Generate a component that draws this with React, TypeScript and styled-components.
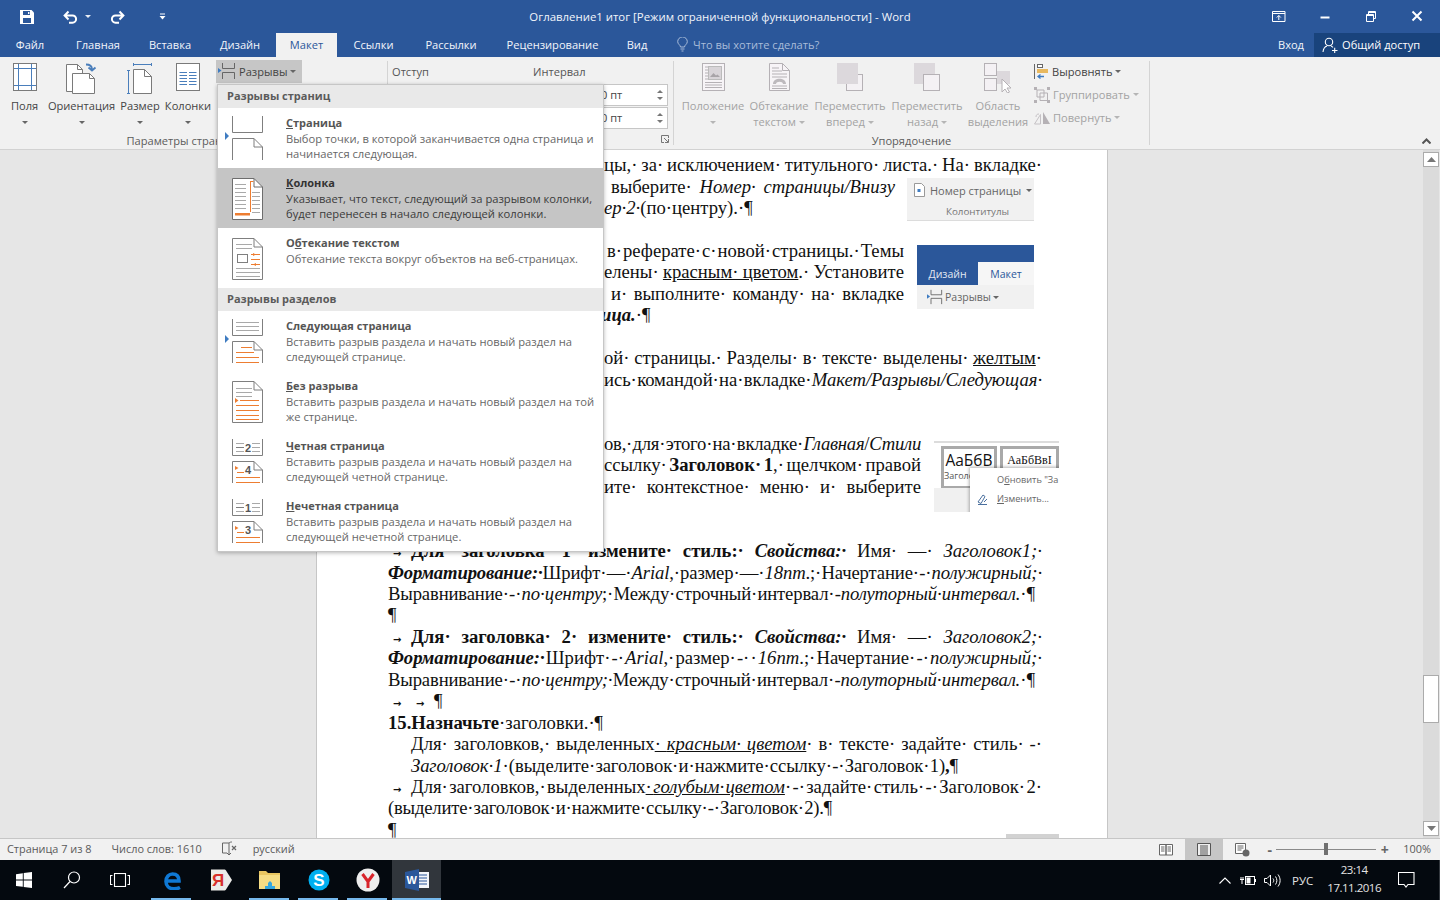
import React from "react";
import styled, { createGlobalStyle } from "styled-components";

const UI = `"Open Sans", "Noto Sans", "Liberation Sans", sans-serif`;

const GlobalStyle = createGlobalStyle`
  html, body { margin: 0; padding: 0; height: 100%; overflow: hidden; }
  #root { height: 100%; }
  * { box-sizing: border-box; }
`;

// шапка окна
const Word = styled.div`
  position: relative;
  width: 1440px;
  height: 900px;
  display: flex;
  flex-direction: column;
  overflow: hidden;
  font-family: ${UI};
  font-size: 11.1px;
  color: #444;
  background: #e6e6e6;
`;

const TitleBar = styled.div`
  height: 33px;
  flex: none;
  display: grid;
  grid-template-columns: 1fr auto 1fr;
  align-items: center;
  background: #2b579a;
  color: #fff;
`;

const Qat = styled.div`
  display: flex;
  align-items: center;
  height: 100%;
  padding-left: 19px;
`;

const QatBtn = styled.span<{ $w: number }>`
  width: ${({ $w }) => $w}px;
  display: flex;
  align-items: center;
  justify-content: flex-start;
`;

const Title = styled.div`
  font-size: 11.4px;
  color: #f2f5fa;
  white-space: nowrap;
`;

const WinButtons = styled.div`
  display: flex;
  justify-content: flex-end;
  height: 100%;
`;

const WinBtn = styled.span`
  width: 46px;
  display: flex;
  align-items: center;
  justify-content: center;
`;

const TabBar = styled.div`
  height: 24px;
  flex: none;
  display: flex;
  align-items: stretch;
  background: #2b579a;
  color: #f2f5fa;
`;

const Tab = styled.div<{ $active?: boolean; $w: number }>`
  width: ${({ $w }) => $w}px;
  display: flex;
  align-items: center;
  justify-content: center;
  padding-bottom: 1px;
  white-space: nowrap;
  background: ${({ $active }) => ($active ? "#f1f1f1" : "transparent")};
  color: ${({ $active }) => ($active ? "#2b579a" : "#f2f5fa")};
`;

const TellMe = styled.div`
  display: flex;
  align-items: center;
  gap: 5px;
  margin-left: 16px;
  padding-bottom: 1px;
  color: #a9bcd9;
  white-space: nowrap;
`;

const TabRight = styled.div`
  margin-left: auto;
  display: flex;
  align-items: stretch;
`;

const Login = styled.div`
  display: flex;
  align-items: center;
  padding: 0 10px 1px 0;
`;

const Share = styled.div`
  width: 126px;
  display: flex;
  align-items: center;
  gap: 4px;
  padding: 0 0 1px 8px;
  background: #19437c;
  color: #fff;
  white-space: nowrap;
`;

const Ribbon = styled.div`
  height: 93px;
  flex: none;
  display: flex;
  padding-top: 4px;
  background: #f1f1f1;
  border-bottom: 1px solid #d2d2d2;
`;

const Group = styled.div<{ $w: number }>`
  width: ${({ $w }) => $w}px;
  height: 84px;
  flex: none;
  display: flex;
  flex-direction: column;
  border-right: 1px solid #d4d4d4;
`;

const GroupBody = styled.div<{ $pad?: number }>`
  flex: 1;
  min-height: 0;
  display: flex;
  padding-left: ${({ $pad }) => $pad ?? 0}px;
`;

const GroupLabel = styled.div<{ $pr?: number }>`
  height: 12px;
  margin-bottom: -2px;
  padding-right: ${({ $pr }) => $pr ?? 0}px;
  line-height: 12px;
  text-align: center;
  white-space: nowrap;
  color: #5c5c5c;
`;

const LauncherRow = styled.div`
  height: 12px;
  margin-bottom: -2px;
  display: flex;
  justify-content: flex-end;
  padding-right: 4px;
`;

const LargeBtn = styled.div<{ $w: number; $off?: boolean }>`
  width: ${({ $w }) => $w}px;
  flex: none;
  display: flex;
  flex-direction: column;
  align-items: center;
  padding-top: 2px;
  color: ${({ $off }) => ($off ? "#a3a3a3" : "#444")};
  white-space: nowrap;
`;

const LargeIcon = styled.div`
  height: 32px;
  display: flex;
  align-items: flex-start;
  justify-content: center;
  margin-bottom: 3px;
`;

const BtnLine = styled.div`
  height: 16px;
  line-height: 16px;
  display: flex;
  align-items: center;
  gap: 3px;
`;

const Caret = styled.i<{ $off?: boolean; $white?: boolean }>`
  display: inline-block;
  width: 0;
  height: 0;
  border-left: 3px solid transparent;
  border-right: 3px solid transparent;
  border-top: 3px solid ${({ $off, $white }) => ($white ? "#e8edf5" : $off ? "#b5b5b5" : "#666")};
`;

const BreaksBtn = styled.div`
  width: 86px;
  height: 23px;
  flex: none;
  margin-top: -1px;
  display: flex;
  align-items: center;
  gap: 3px;
  padding: 0 0 1px 2px;
  background: #c6c6c6;
  color: #444;
`;

const ParaCol = styled.div<{ $w: number }>`
  width: ${({ $w }) => $w}px;
  flex: none;
  display: flex;
  flex-direction: column;
`;

const ParaHead = styled.div`
  height: 23px;
  line-height: 21px;
  color: #555;
`;

const Spinner = styled.div`
  width: 78px;
  height: 22px;
  margin: 0 0 1px auto;
  display: flex;
  align-items: center;
  justify-content: space-between;
  padding: 0 4px 1px 10px;
  background: #fff;
  border: 1px solid #c6c6c6;
`;

const SpinArrows = styled.span`
  display: flex;
  flex-direction: column;
  gap: 4px;
`;

const SpinUp = styled.i`
  display: block;
  width: 0;
  height: 0;
  border-left: 3px solid transparent;
  border-right: 3px solid transparent;
  border-bottom: 3px solid #777;
`;

const SpinDown = styled(SpinUp)`
  border-bottom: 0;
  border-top: 3px solid #777;
`;

const SmallCol = styled.div`
  display: flex;
  flex-direction: column;
  margin: -1px 0 0 2px;
`;

const SmallBtn = styled.div<{ $off?: boolean }>`
  height: 23px;
  display: flex;
  align-items: center;
  gap: 3px;
  color: ${({ $off }) => ($off ? "#a3a3a3" : "#444")};
  white-space: nowrap;
`;

const Collapse = styled.div`
  margin-left: auto;
  flex: none;
  align-self: flex-end;
  padding: 0 9px 5px 0;
  display: flex;
`;

// документ
const Workspace = styled.div`
  flex: 1;
  min-height: 0;
  display: flex;
  overflow: hidden;
  background: #e6e6e6;
`;

const Page = styled.div`
  width: 792px;
  margin-left: 316px;
  flex: none;
  padding: 4.3px 65px 0 71px;
  background: #fff;
  border-left: 1px solid #c6c6c6;
  border-right: 1px solid #c6c6c6;
  font-family: "Liberation Serif", "Times New Roman", serif;
  font-size: 18.67px;
  color: #111;
`;

// пробелы в строке нулевой ширины, зазоры дает только выравнивание
const Line = styled.div<{ $from?: number; $to?: number; $just?: boolean; $ls?: number }>`
  height: 21.45px;
  line-height: 21.45px;
  white-space: nowrap;
  margin-left: ${({ $from }) => $from ?? 0}px;
  margin-right: ${({ $to }) => $to ?? 0}px;
  text-align: ${({ $just }) => ($just ? "justify" : "left")};
  text-align-last: ${({ $just }) => ($just ? "justify" : "left")};
  word-spacing: ${({ $just }) => ($just ? "-0.25em" : "0")};
  letter-spacing: ${({ $ls }) => $ls ?? 0}px;
`;

const TabMark = styled.span`
  display: inline-block;
  width: 23px;
  text-indent: 5px;
  font-family: "DejaVu Sans", sans-serif;
  font-size: 10px;
  font-weight: 700;
  letter-spacing: 0;
`;

const Block = styled.div`
  display: flex;
  align-items: flex-start;
`;

const TextCol = styled.div<{ $w: number }>`
  width: ${({ $w }) => $w}px;
  flex: none;
`;

const Scroll = styled.div`
  width: 16px;
  margin-left: auto;
  margin-right: 1px;
  padding: 2px 0;
  display: flex;
  flex-direction: column;
  background: #dbdbdb;
`;

const ScrollBtn = styled.div`
  height: 15px;
  flex: none;
  display: flex;
  align-items: center;
  justify-content: center;
  background: #fff;
  border: 1px solid #ababab;
`;

const ScrollThumb = styled.div`
  height: 48px;
  margin-top: 508px;
  margin-bottom: auto;
  flex: none;
  background: #fff;
  border: 1px solid #ababab;
`;

// картинки внутри документа
const SnipNumber = styled.div`
  width: 127px;
  height: 43px;
  margin: 2px 0 0 12px;
  flex: none;
  display: flex;
  flex-direction: column;
  background: #f1f1f1;
  border-bottom: 1px solid #dcdcdc;
  font-family: ${UI};
  font-size: 11px;
  color: #666;
`;

const SnipRow = styled.div`
  display: flex;
  align-items: center;
  gap: 5px;
  height: 25px;
  padding-left: 7px;
  white-space: nowrap;
`;

const SnipCaption = styled.div`
  text-align: center;
  padding-left: 14px;
  font-size: 9.8px;
  line-height: 17px;
  color: #777;
`;

const SnipTabs = styled.div`
  width: 117px;
  height: 64px;
  margin: 5px 0 0 13px;
  flex: none;
  display: flex;
  flex-direction: column;
  background: #2b579a;
  font-family: ${UI};
  font-size: 10.5px;
`;

const SnipTabRow = styled.div`
  margin-top: 17px;
  height: 23px;
  display: flex;
  align-items: center;
  color: #e3e9f3;
`;

const SnipTabName = styled.span`
  width: 61px;
  text-align: center;
`;

const SnipTabOn = styled.span`
  flex: 1;
  height: 100%;
  display: flex;
  align-items: center;
  justify-content: center;
  background: #f6f6f6;
  color: #2b579a;
`;

const SnipBreaks = styled.div`
  flex: 1;
  display: flex;
  align-items: center;
  gap: 2px;
  padding-left: 10px;
  background: #f1f1f1;
  color: #666;
`;

const SnipStyles = styled.div`
  position: relative;
  width: 125px;
  height: 71px;
  margin: 8px -17px 0 13px;
  flex: none;
  overflow: hidden;
  padding: 3px 0 0 7px;
  background: #fff;
  border-top: 2px solid #dcdcdc;
  font-family: ${UI};
`;

const StyleRow = styled.div`
  display: flex;
  gap: 3px;
`;

const StyleBox = styled.div<{ $w: number; $serif?: boolean }>`
  width: ${({ $w }) => $w}px;
  height: 43px;
  flex: none;
  padding-top: 2px;
  text-align: center;
  white-space: nowrap;
  overflow: hidden;
  border: 3px solid #a9a9a9;
  color: #111;
  font-family: ${({ $serif }) => ($serif ? `"Liberation Serif", serif` : UI)};
  font-size: ${({ $serif }) => ($serif ? 12 : 15.5)}px;
  line-height: 18px;
`;

const StyleCaption = styled.div`
  font-size: 9px;
  line-height: 14px;
  text-align: left;
  color: #555;
`;

const StyleStrip = styled.div`
  position: absolute;
  left: 0;
  bottom: 0;
  width: 36px;
  height: 24px;
  background: #f0f0f0;
`;

const StyleMenu = styled.div`
  position: absolute;
  left: 36px;
  top: 25px;
  width: 100px;
  height: 50px;
  padding: 2px 0 0 27px;
  background: #fff;
  box-shadow: -1px -1px 3px rgba(0, 0, 0, 0.3);
  font-size: 9.2px;
  line-height: 19px;
  color: #666;
  white-space: nowrap;
`;

const StyleMenuPen = styled.svg`
  position: absolute;
  left: 7px;
  top: 25px;
`;

const SnipNext = styled.div`
  width: 53px;
  height: 30px;
  margin: 14.75px -17px 0 0;
  flex: none;
  background: #d2d2d2;
`;

// меню разрывов
const Menu = styled.div`
  position: absolute;
  left: 217px;
  top: 84px;
  width: 387px;
  background: #fff;
  border: 1px solid #c6c6c6;
  box-shadow: 0 1px 4px rgba(0, 0, 0, 0.28);
`;

const MenuHead = styled.div`
  height: 23px;
  line-height: 22px;
  padding-left: 9px;
  background: #e9e9e9;
  font-size: 11px;
  font-weight: 700;
  color: #5b5b5b;
`;

const MenuItem = styled.div<{ $on?: boolean }>`
  height: 60px;
  display: flex;
  padding-left: 4px;
  background: ${({ $on }) => ($on ? "#c5c5c5" : "transparent")};
`;

const MenuIcon = styled.svg`
  flex: none;
`;

const MenuText = styled.div<{ $on?: boolean }>`
  padding: 6px 0 0 20px;
  font-size: 11.2px;
  line-height: 15px;
  color: ${({ $on }) => ($on ? "#3b3b3b" : "#676767")};
  white-space: nowrap;
`;

const MenuTitle = styled.div<{ $on?: boolean }>`
  font-size: 11px;
  font-weight: 700;
  line-height: 17px;
  color: ${({ $on }) => ($on ? "#333" : "#555")};
`;

// строка состояния
const StatusBar = styled.div`
  height: 22px;
  flex: none;
  display: flex;
  align-items: stretch;
  background: #f1f1f1;
  border-top: 1px solid #c6c6c6;
  font-size: 10.9px;
  color: #5a5a5a;
`;

const StatusItem = styled.div<{ $gap: number }>`
  display: flex;
  align-items: center;
  margin-left: ${({ $gap }) => $gap}px;
  padding-bottom: 2px;
  white-space: nowrap;
`;

const StatusRight = styled.div`
  margin-left: auto;
  display: flex;
  align-items: stretch;
  padding-right: 9px;
`;

const ViewBtn = styled.div<{ $on?: boolean }>`
  width: 38px;
  display: flex;
  align-items: center;
  justify-content: center;
  background: ${({ $on }) => ($on ? "#c6c6c6" : "transparent")};
`;

const Zoom = styled.div`
  display: flex;
  align-items: center;
  margin-left: 4px;
`;

const ZoomTrack = styled.div`
  width: 100px;
  height: 1px;
  display: flex;
  justify-content: center;
  margin: 0 4px 0 2px;
  background: #8a8a8a;
`;

const ZoomThumb = styled.i`
  display: block;
  width: 4px;
  height: 12px;
  margin-top: -6px;
  background: #6f6f6f;
`;

const ZoomSign = styled.span`
  width: 9px;
  text-align: center;
  font-size: 14px;
  font-weight: 700;
  line-height: 14px;
  color: #666;
`;

const Taskbar = styled.div`
  height: 40px;
  flex: none;
  display: flex;
  align-items: stretch;
  background: #04090f;
  color: #e4e4e4;
`;

const SysBtn = styled.div`
  width: 48px;
  display: flex;
  align-items: center;
  justify-content: center;
`;

const Apps = styled.div`
  display: flex;
  margin-left: 3px;
`;

const AppBtn = styled.div<{ $running?: boolean; $active?: boolean }>`
  position: relative;
  width: 49px;
  display: flex;
  align-items: center;
  justify-content: center;
  background: ${({ $active }) => ($active ? "#31363c" : "transparent")};

  &::after {
    content: "";
    position: absolute;
    left: ${({ $active }) => ($active ? 0 : 4)}px;
    right: ${({ $active }) => ($active ? 0 : 5)}px;
    bottom: 0;
    height: 2px;
    background: ${({ $running }) => ($running ? "#76b9ed" : "transparent")};
  }
`;

const Tray = styled.div`
  margin-left: auto;
  display: flex;
  align-items: center;
  padding-right: 4px;
  border-right: 1px solid #33383e;
  font-size: 11.5px;
`;

const TrayItem = styled.div<{ $gap: number }>`
  margin-left: ${({ $gap }) => $gap}px;
  display: flex;
  align-items: center;
`;

const Clock = styled.div`
  margin: -2px 0 0 14px;
  text-align: center;
  line-height: 18px;
  letter-spacing: -0.5px;
  white-space: nowrap;
`;

/* иконки ленты */
const SaveIcon = () => (
  <svg width="16" height="16" viewBox="0 0 16 16">
    <path d="M1 1h11.5L15 3.5V15H1z" fill="#fff" />
    <path d="M4 2h7v4H4zM4 9h8v5H4z" fill="#2b579a" />
    <path d="M9 3h1.4v2H9z" fill="#fff" />
  </svg>
);

const UndoIcon = ({ flip }: { flip?: boolean }) => (
  <svg width="15" height="14" viewBox="0 0 15 14" style={flip ? { transform: "scaleX(-1)" } : undefined}>
    <path d="M2 5.5h7.5a3.6 3.6 0 0 1 0 7.2H6M5.5 1.5 1.6 5.5l3.9 4" fill="none" stroke="#fff" strokeWidth="2" />
  </svg>
);

const CustomizeIcon = () => (
  <svg width="7" height="7" viewBox="0 0 7 7">
    <path d="M1 1h5" stroke="#fff" />
    <path d="M.5 3h6L3.5 6.5z" fill="#fff" />
  </svg>
);

const WinIcon = ({ kind }: { kind: string }) => (
  <svg width="14" height="13" viewBox="0 0 14 13" fill="none" stroke="#fff">
    {kind === "ribbon" && <path d="M.5 1.5h12.5v10H.5zM.5 3.5h12.5M6.8 10V5.5M4.8 7.5l2-2 2 2" />}
    {kind === "min" && <path d="M2.5 7.5h9" strokeWidth="2" />}
    {kind === "max" && <path d="M2.5 4.5h7v7h-7zM4.5 4V1.5h7v7H10M2.5 5.5h7M4.5 2.5h7" />}
    {kind === "close" && <path d="M2.5 1.5l9 9M11.5 1.5l-9 9" strokeWidth="2" />}
  </svg>
);

const BulbIcon = () => (
  <svg width="11" height="15" viewBox="0 0 11 15" fill="none" stroke="#a9bcd9">
    <path d="M3.5 10c0-2-2.8-2.8-2.8-5.3a4.8 4.8 0 0 1 9.6 0C10.3 7.2 7.5 8 7.5 10zM3.5 12h4M4.5 14h2" />
  </svg>
);

const UserIcon = () => (
  <svg width="16" height="16" viewBox="0 0 16 16" fill="none" stroke="#fff" strokeWidth="1.1">
    <circle cx="7" cy="5" r="3.7" />
    <path d="M1 15c.4-3.5 2.4-5.5 4-6M9 9c.8.3 1.5.8 2 1.4M10 13.5h5.5M12.7 10.7v5.3" />
  </svg>
);

const MarginsIcon = () => (
  <svg width="24" height="29" viewBox="0 0 24 29" fill="#fff">
    <rect x=".5" y=".5" width="23" height="27" stroke="#7a7a7a" />
    <path d="M5.5 1v26M18.5 1v26M1 5.5h22M1 22.5h22" stroke="#4a7ebb" fill="none" />
  </svg>
);

const OrientIcon = () => (
  <svg width="31" height="32" viewBox="0 0 31 32" fill="#fff" stroke="#7a7a7a">
    <path d="M.5 1.5h11l5 5v22H.5z" />
    <path d="M11.5 1.5v5h5" fill="none" />
    <path d="M6.5 10.5h17l5 5v15h-22z" />
    <path d="M23.5 10.5v5h5" fill="none" />
    <path d="M20 1.5c4 0 6 1.500 6 5M22.5 4.500l3.500 3 3.500-3" fill="none" stroke="#4a7ebb" strokeWidth="1.8" />
  </svg>
);

const SizeIcon = () => (
  <svg width="26" height="31" viewBox="0 0 26 31" fill="#fff" stroke="#7a7a7a">
    <path d="M6.5 1.5h18M6.5 0v3M24.5 0v3M1.5 7v24M0 7.5h3M0 30.5h3" stroke="#4a7ebb" fill="none" />
    <path d="M6.5 6.5h11l7 7v17h-18z" />
    <path d="M17.5 6.5v7h7" fill="none" />
  </svg>
);

const ColumnsIcon = () => (
  <svg width="24" height="29" viewBox="0 0 24 29" fill="#fff">
    <rect x=".5" y=".5" width="23" height="27" stroke="#7a7a7a" />
    <path d="M3.5 9.5h7.5M13 9.5h7.5M3.5 12.5h7.5M13 12.5h7.5M3.5 15.5h7.5M13 15.5h7.5M3.5 18.5h7.5M13 18.5h7.5M3.5 21.5h7.5M13 21.5h7.5" stroke="#4a7ebb" />
  </svg>
);

const BreaksIcon = ({ w = 18 }: { w?: number }) => (
  <svg width={w} height="16" viewBox="0 0 18 16" fill="none" stroke="#666">
    <path d="M4.5 0v5.5h12V0M4.5 16V9.5h12V16" />
    <path d="M0 5l3.5 2.5L0 10z" fill="#3f7cc1" stroke="none" />
  </svg>
);

const PositionIcon = () => (
  <svg width="23" height="28" viewBox="0 0 23 28" fill="#f7f4f7" stroke="#b5b1b5">
    <rect x=".5" y=".5" width="22" height="27" />
    <path d="M3 4h3M3 7h3M3 10h3M3 13h3M3 16h3M3 19.5h17M3 22h17M3 24.5h17" fill="none" />
    <rect x="6.5" y="3.5" width="13" height="13" fill="#d8d4d8" stroke="#bbb" />
    <path d="M8 14l3.5-4 2.5 2.5 1.5-1 2.5 2.5z" fill="#a8a4a8" stroke="none" />
  </svg>
);

const WrapIcon = () => (
  <svg width="21" height="28" viewBox="0 0 21 28" fill="#f7f4f7" stroke="#b5b1b5">
    <path d="M.5.5h13l7 7v20H.5z" />
    <path d="M13.5.5v7h7M3 5h7M3 8h10M3 11h15M3 14h15M3 23h15M3 25.5h15" fill="none" />
    <path d="M4 21c0-7 13-7 13 0h-3c0-3-7-3-7 0z" fill="#bdb9bd" stroke="none" />
  </svg>
);

const ForwardIcon = () => (
  <svg width="27" height="28" viewBox="0 0 27 28">
    <rect x="9.5" y="11.5" width="16" height="16" fill="#f4f1f4" stroke="#b5b1b5" />
    <rect width="21" height="21" fill="#dcd8dc" />
  </svg>
);

const BackwardIcon = () => (
  <svg width="27" height="28" viewBox="0 0 27 28">
    <rect width="21" height="21" fill="#dcd8dc" />
    <rect x="9.5" y="11.5" width="16" height="16" fill="#f4f1f4" stroke="#b5b1b5" />
  </svg>
);

const SelectionIcon = () => (
  <svg width="29" height="30" viewBox="0 0 29 30">
    <rect x=".5" y=".5" width="12" height="12" fill="#f4f1f4" stroke="#b5b1b5" />
    <rect x="13" y="8" width="13" height="13" fill="#dcd8dc" />
    <rect x=".5" y="15.5" width="12" height="12" fill="#f4f1f4" stroke="#b5b1b5" />
    <path d="M18 16v13l3-3 2.5 4 2-1-2.5-4h4z" fill="#fff" stroke="#b5b1b5" />
  </svg>
);

const AlignIcon = () => (
  <svg width="15" height="15" viewBox="0 0 15 15">
    <path d="M.5 0v15" stroke="#666" />
    <rect x="3.5" y=".5" width="5" height="3" fill="#fff" stroke="#666" />
    <rect x="3" y="5" width="11" height="4" fill="#e8b85e" />
    <path d="M10 12.5H4M6.5 10.5l-2.5 2 2.5 2" fill="none" stroke="#3f7cc1" strokeWidth="1.3" />
  </svg>
);

const GroupIcon = () => (
  <svg width="16" height="16" viewBox="0 0 16 16" fill="none" stroke="#b5b1b5">
    <path d="M3 3h7v7H3zM6 6h7.5v7.5H6z" />
    <path d="M0 0h3v3H0zM13 0h3v3h-3zM0 13h3v3H0zM13 13h3v3h-3z" fill="#b5b1b5" stroke="none" />
  </svg>
);

const RotateIcon = () => (
  <svg width="16" height="14" viewBox="0 0 16 14">
    <path d="M9 1v12h7z" fill="#b5b1b5" />
    <path d="M6.5 3.5v9.5H.5zM2 6c0-2 1-3 3-3" fill="none" stroke="#c5c1c5" />
  </svg>
);

const PageNumberIcon = () => (
  <svg width="11" height="14" viewBox="0 0 11 14" fill="#fff" stroke="#999">
    <path d="M.5.5h7l3 3v10H.5z" />
    <rect x="3.5" y="6" width="3" height="3" fill="#3f7cc1" stroke="none" />
  </svg>
);

const LauncherIcon = () => (
  <svg width="8" height="8" viewBox="0 0 8 8" fill="none" stroke="#777">
    <path d="M7.5 3V.5H.5v7H3M3 3l4 4M4 7.5h3.5V4" />
  </svg>
);

/* иконки меню */
const GR = "#7f7f7f";
const LG = "#a9a9a9";
const OR = "#ed7d31";

const Marker = () => <path d="M3 24l4 4-4 4z" fill="#3f7cc1" />;

const lines = (x1: number, x2: number, ys: number[], color: string) => (
  <path d={ys.map((y) => `M${x1} ${y}.5H${x2}`).join("")} stroke={color} fill="none" />
);

const TopSheet = () => <path d="M10.5 8V24.5H40.5V8" stroke={GR} fill="none" />;
const BottomSheet = () => (
  <>
    <path d="M10.5 52V30.5H32L40.5 39V52" stroke={GR} fill="#fff" />
    <path d="M32 30.5V39H40.5" stroke={GR} fill="none" />
  </>
);
const FullSheet = ({ on }: { on?: boolean }) => (
  <>
    <path d="M10.5 10.5H32L40.5 19V51.5H10.5z" stroke={on ? "#6d6d6d" : GR} fill="#fff" />
    <path d="M32 10.5V19H40.5" stroke={on ? "#6d6d6d" : GR} fill="none" />
  </>
);

const NumberMark = ({ x, y, n }: { x: number; y: number; n: string }) => (
  <text x={x} y={y} fontFamily='"Liberation Sans", sans-serif' fontWeight="700" fontSize="11" fill="#555">
    {n}
  </text>
);

const MenuIconBox = ({ children }: { children: React.ReactNode }) => (
  <MenuIcon width="44" height="60" viewBox="0 0 44 60">
    {children}
  </MenuIcon>
);

const PageBreakIcon = () => (
  <MenuIconBox>
    <Marker />
    <TopSheet />
    <BottomSheet />
  </MenuIconBox>
);

const ColumnBreakIcon = () => (
  <MenuIconBox>
    <FullSheet on />
    {lines(13, 24, [16, 20, 24, 28, 32, 36, 40], LG)}
    {lines(30, 38, [24, 28, 32, 36, 40, 44], LG)}
    <path d="M28.5 13v31" stroke={OR} fill="none" />
    <path d="M13 45h15v2.5H13z" fill={OR} />
    <path d="M28.5 13.5h3" stroke={OR} fill="none" />
  </MenuIconBox>
);

const WrapBreakIcon = () => (
  <MenuIconBox>
    <FullSheet />
    {lines(14, 30, [16, 20], LG)}
    {lines(14, 38, [40, 44, 48], LG)}
    <rect x="15.5" y="26.5" width="10" height="8" fill="#fff" stroke={GR} />
    {lines(29, 38, [26, 31, 36], OR)}
    <path d="M34 35l-3 1.5 3 1.5zM31 25l3 1.5-3 1.5z" fill={OR} />
  </MenuIconBox>
);

const NextPageIcon = () => (
  <MenuIconBox>
    <Marker />
    <TopSheet />
    {lines(14, 37, [11, 15, 19], LG)}
    <BottomSheet />
    {lines(19, 30, [36], OR)}
    {lines(14, 32, [41], OR)}
    {lines(14, 37, [46, 51], OR)}
  </MenuIconBox>
);

const ContinuousIcon = () => (
  <MenuIconBox>
    <FullSheet />
    {lines(14, 30, [17, 21, 25], LG)}
    {lines(18, 37, [29], OR)}
    {lines(14, 37, [34, 39, 44, 48], OR)}
    <path d="M13 27l3.5 2.5L13 32z" fill={OR} />
  </MenuIconBox>
);

const NumberedIcon = ({ top, bottom }: { top: string; bottom: string }) => (
  <MenuIconBox>
    <TopSheet />
    {lines(14, 22, [12, 20], LG)}
    {lines(30, 38, [12, 20], LG)}
    {lines(14, 22, [16], GR)}
    {lines(30, 38, [16], LG)}
    <NumberMark x={23} y={21} n={top} />
    <BottomSheet />
    {lines(15, 22, [41], OR)}
    {lines(14, 38, [46, 51], OR)}
    <path d="M13 35l3.5 2-3.5 2z" fill={OR} />
    <NumberMark x={23} y={43} n={bottom} />
  </MenuIconBox>
);

/* строка состояния и панель задач */
const SpellIcon = () => (
  <svg width="15" height="15" viewBox="0 0 15 15" fill="none" stroke="#666">
    <path d="M7 2H.5v10H5l2 2V2c1-1 2-1 3-1M7 14l2-2" />
    <path d="M10 5l4 4M14 5l-4 4" strokeWidth="1.2" />
  </svg>
);

const ReadIcon = () => (
  <svg width="14" height="13" viewBox="0 0 14 13" fill="#fff" stroke="#666">
    <path d="M.5 1.5h6.5v10.500H.5zM7 1.5h6.500v10.500H7z" />
    <path d="M2 4h3.500M2 6h3.500M2 8h3.500M8.500 4H12M8.500 6H12M8.500 8H12" fill="none" />
  </svg>
);

const PrintIcon = () => (
  <svg width="14" height="13" viewBox="0 0 14 13" fill="#eee" stroke="#555">
    <path d="M.5.5h13v12H.5z" />
    <path d="M3 3h8M3 5h8M3 7h8M3 9h8M3 11h8" fill="none" />
  </svg>
);

const WebIcon = () => (
  <svg width="15" height="14" viewBox="0 0 15 14" fill="#fff" stroke="#666">
    <path d="M.5.5h10v10H.5z" />
    <path d="M2.5 3h6M2.5 5h6M2.5 7h4" fill="none" />
    <circle cx="11" cy="10" r="3.5" fill="#666" stroke="none" />
  </svg>
);

const ChevronDown = () => (
  <svg width="9" height="5" viewBox="0 0 9 5">
    <path d="M0 0h9L4.5 5z" fill="#777" />
  </svg>
);

const ChevronUp = () => (
  <svg width="9" height="5" viewBox="0 0 9 5">
    <path d="M0 5h9L4.5 0z" fill="#777" />
  </svg>
);

const CollapseIcon = () => (
  <svg width="9" height="6" viewBox="0 0 9 6" fill="none" stroke="#555" strokeWidth="2">
    <path d="M.5 5.500l4-4 4 4" />
  </svg>
);

const WindowsLogo = () => (
  <svg width="16" height="16" viewBox="0 0 16 16" fill="#fff">
    <path d="M0 2.2l6.800-.9v6.300H0zM7.700 1.100L16 0v7.600H7.700zM0 8.500h6.800v6.300L0 13.900zM7.700 8.500H16V16l-8.300-1.100z" />
  </svg>
);

const SearchIcon = () => (
  <svg width="18" height="18" viewBox="0 0 18 18" fill="none" stroke="#fff" strokeWidth="1.2">
    <circle cx="11" cy="6.5" r="5.5" />
    <path d="M7 10.5L1 17" />
  </svg>
);

const TaskViewIcon = () => (
  <svg width="20" height="14" viewBox="0 0 20 14" fill="none" stroke="#fff" strokeWidth="1.1">
    <rect x="4.5" y=".5" width="11" height="13" />
    <path d="M2.5 2.5H.5v9h2M17.5 2.5h2v9h-2" />
  </svg>
);

const EdgeIcon = () => (
  <svg width="20" height="20" viewBox="0 0 20 20" fill="none" stroke="#0f78d4" strokeWidth="3.6">
    <path d="M18 17.5c-2 1-4 1.300-6 1.300-5 0-8-3-8-7.300C4 7 7 4 10.5 4c4 0 6.500 2.500 6.500 7H3" />
  </svg>
);

const YandexIcon = () => (
  <svg width="24" height="24" viewBox="0 0 24 24">
    <path d="M2 1.5h13c1 0 1.500.3 2 1l6 9.500-6 9.500c-.5.7-1 1-2 1H2z" fill="#ecebe8" />
    <text x="3" y="18" fontFamily='"Liberation Sans", sans-serif' fontWeight="700" fontSize="17" fill="#d8302a">
      Я
    </text>
  </svg>
);

const FolderIcon = () => (
  <svg width="22" height="18" viewBox="0 0 22 18">
    <path d="M0 0h7l2 2h12v16H0z" fill="#e9c661" />
    <path d="M0 4h21v14H0z" fill="#f6dd85" />
    <path d="M6 15h3v-3l2-2 2 2v3h3v3H6z" fill="#35a7e0" />
  </svg>
);

const SkypeIcon = () => (
  <svg width="22" height="22" viewBox="0 0 22 22">
    <circle cx="11" cy="11" r="10.5" fill="#00aff0" />
    <text x="11" y="17" textAnchor="middle" fontFamily='"Liberation Sans", sans-serif' fontWeight="700" fontSize="17" fill="#fff">
      S
    </text>
  </svg>
);

const BrowserIcon = () => (
  <svg width="24" height="24" viewBox="0 0 24 24">
    <circle cx="12" cy="12" r="11.5" fill="#eeeeee" />
    <path d="M6.5 6L12 13.5V20M17.5 6L12 13.5" fill="none" stroke="#d8232a" strokeWidth="3" />
  </svg>
);

const WordIcon = () => (
  <svg width="24" height="22" viewBox="0 0 24 22">
    <path d="M11 3h13v16H11z" fill="#f4f6fa" />
    <path d="M13 6h9M13 9h9M13 12h9M13 15h9" stroke="#2b579a" />
    <path d="M0 3l14-3v22L0 19z" fill="#2b579a" />
    <text x="1.5" y="15" fontFamily='"Liberation Sans", sans-serif' fontWeight="700" fontSize="11" fill="#fff">
      W
    </text>
  </svg>
);

const TrayChevron = () => (
  <svg width="12" height="7" viewBox="0 0 12 7" fill="none" stroke="#fff" strokeWidth="1.1">
    <path d="M.5 6.5L6 1l5.5 5.5" />
  </svg>
);

const PowerIcon = () => (
  <svg width="16" height="11" viewBox="0 0 16 11" fill="none" stroke="#fff">
    <rect x="5.5" y="1.5" width="9" height="8" />
    <rect x="6.5" y="2.5" width="4" height="6" fill="#fff" stroke="none" />
    <path d="M15.5 4v3M0 4.5h4M1 2v2.5M3 2v2.5M2 5v4" />
  </svg>
);

const SpeakerIcon = () => (
  <svg width="17" height="13" viewBox="0 0 17 13" fill="none" stroke="#fff">
    <path d="M.5 4.5h2.5L6.5 1v11L3 8.5H.5zM9 4.5c1 1.300 1 2.700 0 4M11.500 2.500c1.800 2.500 1.800 5.500 0 8M14 .5c2.800 3.600 2.800 8.400 0 12" />
  </svg>
);

const ActionIcon = () => (
  <svg width="17" height="16" viewBox="0 0 17 16" fill="none" stroke="#fff" strokeWidth="1.1">
    <path d="M.5.5h15.5v12H10L8 15l-2-2.5H.5z" />
  </svg>
);

const PenIcon = () => (
  <StyleMenuPen width="11" height="12" viewBox="0 0 11 12" fill="none" stroke="#4a6f9e">
    <path d="M1 9l5-7 2 1.5-4 7zM1 11.5h9M7 9l3-3" />
  </StyleMenuPen>
);

type Item = { title: React.ReactNode; text: string[]; icon: React.ReactNode; on?: boolean };

const pageBreaks: Item[] = [
  {
    title: <><u>С</u>траница</>,
    text: ["Выбор точки, в которой заканчивается одна страница и", "начинается следующая."],
    icon: <PageBreakIcon />,
  },
  {
    title: <><u>К</u>олонка</>,
    text: ["Указывает, что текст, следующий за разрывом колонки,", "будет перенесен в начало следующей колонки."],
    icon: <ColumnBreakIcon />,
    on: true,
  },
  {
    title: <>О<u>б</u>текание текстом</>,
    text: ["Обтекание текста вокруг объектов на веб-страницах."],
    icon: <WrapBreakIcon />,
  },
];

const sectionBreaks: Item[] = [
  {
    title: <>Следующая страница</>,
    text: ["Вставить разрыв раздела и начать новый раздел на", "следующей странице."],
    icon: <NextPageIcon />,
  },
  {
    title: <><u>Б</u>ез разрыва</>,
    text: ["Вставить разрыв раздела и начать новый раздел на той", "же странице."],
    icon: <ContinuousIcon />,
  },
  {
    title: <><u>Ч</u>етная страница</>,
    text: ["Вставить разрыв раздела и начать новый раздел на", "следующей четной странице."],
    icon: <NumberedIcon top="2" bottom="4" />,
  },
  {
    title: <><u>Н</u>ечетная страница</>,
    text: ["Вставить разрыв раздела и начать новый раздел на", "следующей нечетной странице."],
    icon: <NumberedIcon top="1" bottom="3" />,
  },
];

const renderItems = (items: Item[]) =>
  items.map((item, i) => (
    <MenuItem key={i} $on={item.on}>
      {item.icon}
      <MenuText $on={item.on}>
        <MenuTitle $on={item.on}>{item.title}</MenuTitle>
        {item.text.map((t) => (
          <div key={t}>{t}</div>
        ))}
      </MenuText>
    </MenuItem>
  ));

const tabs: [string, number, boolean?][] = [
  ["Файл", 60],
  ["Главная", 76],
  ["Вставка", 68],
  ["Дизайн", 72],
  ["Макет", 61, true],
  ["Ссылки", 73],
  ["Рассылки", 82],
  ["Рецензирование", 121],
  ["Вид", 48],
];

const App = () => {
  return (
    <Word>
      <GlobalStyle />
      <TitleBar>
        <Qat>
          <QatBtn $w={44}><SaveIcon /></QatBtn>
          <QatBtn $w={22}><UndoIcon /></QatBtn>
          <QatBtn $w={25}><Caret $white /></QatBtn>
          <QatBtn $w={49}><UndoIcon flip /></QatBtn>
          <QatBtn $w={10}><CustomizeIcon /></QatBtn>
        </Qat>
        <Title>Оглавление1 итог [Режим ограниченной функциональности] - Word</Title>
        <WinButtons>
          <WinBtn><WinIcon kind="ribbon" /></WinBtn>
          <WinBtn><WinIcon kind="min" /></WinBtn>
          <WinBtn><WinIcon kind="max" /></WinBtn>
          <WinBtn><WinIcon kind="close" /></WinBtn>
        </WinButtons>
      </TitleBar>

      <TabBar>
        {tabs.map(([name, w, active]) => (
          <Tab key={name} $w={w} $active={active}>{name}</Tab>
        ))}
        <TellMe>
          <BulbIcon />
          Что вы хотите сделать?
        </TellMe>
        <TabRight>
          <Login>Вход</Login>
          <Share>
            <UserIcon />
            Общий доступ
          </Share>
        </TabRight>
      </TabBar>

      <Ribbon>
        <Group $w={388}>
          <GroupBody $pad={6}>
            <LargeBtn $w={37}>
              <LargeIcon><MarginsIcon /></LargeIcon>
              <BtnLine>Поля</BtnLine>
              <BtnLine><Caret /></BtnLine>
            </LargeBtn>
            <LargeBtn $w={77}>
              <LargeIcon><OrientIcon /></LargeIcon>
              <BtnLine>Ориентация</BtnLine>
              <BtnLine><Caret /></BtnLine>
            </LargeBtn>
            <LargeBtn $w={40}>
              <LargeIcon><SizeIcon /></LargeIcon>
              <BtnLine>Размер</BtnLine>
              <BtnLine><Caret /></BtnLine>
            </LargeBtn>
            <LargeBtn $w={56}>
              <LargeIcon><ColumnsIcon /></LargeIcon>
              <BtnLine>Колонки</BtnLine>
              <BtnLine><Caret /></BtnLine>
            </LargeBtn>
            <BreaksBtn>
              <BreaksIcon />
              Разрывы
              <Caret />
            </BreaksBtn>
          </GroupBody>
          <GroupLabel $pr={16}>Параметры страницы</GroupLabel>
        </Group>

        <Group $w={286}>
          <GroupBody $pad={4}>
            <ParaCol $w={141}>
              <ParaHead>Отступ</ParaHead>
            </ParaCol>
            <ParaCol $w={135}>
              <ParaHead>Интервал</ParaHead>
              <Spinner>
                0 пт
                <SpinArrows><SpinUp /><SpinDown /></SpinArrows>
              </Spinner>
              <Spinner>
                0 пт
                <SpinArrows><SpinUp /><SpinDown /></SpinArrows>
              </Spinner>
            </ParaCol>
          </GroupBody>
          <LauncherRow><LauncherIcon /></LauncherRow>
        </Group>

        <Group $w={476}>
          <GroupBody $pad={4}>
            <LargeBtn $w={70} $off>
              <LargeIcon><PositionIcon /></LargeIcon>
              <BtnLine>Положение</BtnLine>
              <BtnLine><Caret $off /></BtnLine>
            </LargeBtn>
            <LargeBtn $w={62} $off>
              <LargeIcon><WrapIcon /></LargeIcon>
              <BtnLine>Обтекание</BtnLine>
              <BtnLine>текстом <Caret $off /></BtnLine>
            </LargeBtn>
            <LargeBtn $w={80} $off>
              <LargeIcon><ForwardIcon /></LargeIcon>
              <BtnLine>Переместить</BtnLine>
              <BtnLine>вперед <Caret $off /></BtnLine>
            </LargeBtn>
            <LargeBtn $w={74} $off>
              <LargeIcon><BackwardIcon /></LargeIcon>
              <BtnLine>Переместить</BtnLine>
              <BtnLine>назад <Caret $off /></BtnLine>
            </LargeBtn>
            <LargeBtn $w={68} $off>
              <LargeIcon><SelectionIcon /></LargeIcon>
              <BtnLine>Область</BtnLine>
              <BtnLine>выделения</BtnLine>
            </LargeBtn>
            <SmallCol>
              <SmallBtn><AlignIcon /> Выровнять <Caret /></SmallBtn>
              <SmallBtn $off><GroupIcon /> Группировать <Caret $off /></SmallBtn>
              <SmallBtn $off><RotateIcon /> Повернуть <Caret $off /></SmallBtn>
            </SmallCol>
          </GroupBody>
          <GroupLabel>Упорядочение</GroupLabel>
        </Group>
        <Collapse><CollapseIcon /></Collapse>
      </Ribbon>

      <Workspace>
        <Page>
          <Line $from={216} $just>цы,· за· исключением· титульного· листа.· На· вкладке·</Line>
          <Block>
            <TextCol $w={507}>
              <Line $from={223} $just>выберите· <i>Номер· страницы/Внизу</i></Line>
              <Line $from={216}><i>ер·2·</i>(по·центру).·¶</Line>
              <Line />
            </TextCol>
            <SnipNumber>
              <SnipRow><PageNumberIcon />Номер страницы <Caret /></SnipRow>
              <SnipCaption>Колонтитулы</SnipCaption>
            </SnipNumber>
          </Block>
          <Block>
            <TextCol $w={516}>
              <Line $from={219} $just>в· реферате· с· новой· страницы.· Темы</Line>
              <Line $from={216} $just>елены· <u>красным· цветом</u>.· Установите</Line>
              <Line $from={223} $just>и· выполните· команду· на· вкладке</Line>
              <Line $from={213}><b><i>ица.</i></b>·¶</Line>
              <Line />
            </TextCol>
            <SnipTabs>
              <SnipTabRow>
                <SnipTabName>Дизайн</SnipTabName>
                <SnipTabOn>Макет</SnipTabOn>
              </SnipTabRow>
              <SnipBreaks><BreaksIcon w={16} />Разрывы <Caret /></SnipBreaks>
            </SnipTabs>
          </Block>
          <Line $from={216} $just>ой· страницы.· Разделы· в· тексте· выделены· <u>желтым</u>·</Line>
          <Line $from={216} $just $ls={-0.05}>ись· командой· на· вкладке· <i>Макет/Разрывы/Следующая·</i></Line>
          <Line />
          <Line />
          <Block>
            <TextCol $w={533}>
              <Line $from={216} $just $ls={-0.25}>ов,· для· этого· на· вкладке· <i>Главная</i>/<i>Стили</i></Line>
              <Line $from={216} $just>ссылку· <b>Заголовок· 1</b>,· щелчком· правой</Line>
              <Line $from={216} $just>ите· контекстное· меню· и· выберите</Line>
              <Line />
              <Line />
            </TextCol>
            <SnipStyles>
              <StyleRow>
                <StyleBox $w={56}>
                  АаБбВ
                  <StyleCaption>Заголовок 1</StyleCaption>
                </StyleBox>
                <StyleBox $w={59} $serif>АаБбВвI</StyleBox>
              </StyleRow>
              <StyleStrip />
              <StyleMenu>
                <PenIcon />
                <div>О<u>б</u>новить "За</div>
                <div><u>И</u>зменить...</div>
              </StyleMenu>
            </SnipStyles>
          </Block>
          <Line $just><TabMark>→</TabMark><b>Для· заголовка· 1· измените· стиль:·</b> <b><i>Свойства:·</i></b> Имя· —· <i>Заголовок1;·</i></Line>
          <Line $just $ls={-0.13}><b><i>Форматирование:·</i></b>Шрифт· —· <i>Arial</i>,· размер· —· <i>18пт</i>.;· Начертание· -· <i>полужирный;·</i></Line>
          <Line $to={7} $just $ls={-0.15}>Выравнивание· -· <i>по· центру</i>;· Между· строчный· интервал· -<i>полуторный· интервал.</i>· ¶</Line>
          <Line>¶</Line>
          <Line $just><TabMark>→</TabMark><b>Для· заголовка· 2· измените· стиль:·</b> <b><i>Свойства:·</i></b> Имя· —· <i>Заголовок2;·</i></Line>
          <Line $just><b><i>Форматирование:·</i></b> Шрифт· -· <i>Arial</i>,· размер· -· · <i>16пт</i>.;· Начертание· -· <i>полужирный;·</i></Line>
          <Line $to={7} $just $ls={-0.15}>Выравнивание· -· <i>по· центру;·</i> Между· строчный· интервал· -<i>полуторный· интервал.</i>· ¶</Line>
          <Line><TabMark>→</TabMark><TabMark>→</TabMark>¶</Line>
          <Line><b>15.Назначьте</b>·заголовки.·¶</Line>
          <Line $from={23} $just>Для· заголовков,· выделенных<u>· <i>красным· цветом</i></u>· в· тексте· задайте· стиль· -·</Line>
          <Line $from={23} $to={84} $just $ls={-0.1}><i>Заголовок· 1</i>· (выделите· заголовок· и· нажмите· ссылку· -· Заголовок· 1)<b>,</b>¶</Line>
          <Line $just><TabMark>→</TabMark>Для· заголовков,· выделенных<u>· <i>голубым· цветом</i></u>· -· задайте· стиль· -· Заголовок· 2·</Line>
          <Line $to={210} $just $ls={-0.2}>(выделите· заголовок· и· нажмите· ссылку· -· Заголовок· 2).¶</Line>
          <Block>
            <TextCol $w={618}>
              <Line>¶</Line>
            </TextCol>
            <SnipNext />
          </Block>
        </Page>
        <Scroll>
          <ScrollBtn><ChevronUp /></ScrollBtn>
          <ScrollThumb />
          <ScrollBtn><ChevronDown /></ScrollBtn>
        </Scroll>
      </Workspace>

      <StatusBar>
        <StatusItem $gap={7}>Страница 7 из 8</StatusItem>
        <StatusItem $gap={20}>Число слов: 1610</StatusItem>
        <StatusItem $gap={20}><SpellIcon /></StatusItem>
        <StatusItem $gap={16}>русский</StatusItem>
        <StatusRight>
          <ViewBtn><ReadIcon /></ViewBtn>
          <ViewBtn $on><PrintIcon /></ViewBtn>
          <ViewBtn><WebIcon /></ViewBtn>
          <Zoom>
            <ZoomSign>-</ZoomSign>
            <ZoomTrack><ZoomThumb /></ZoomTrack>
            <ZoomSign>+</ZoomSign>
          </Zoom>
          <StatusItem $gap={14}>100%</StatusItem>
        </StatusRight>
      </StatusBar>

      <Taskbar>
        <SysBtn><WindowsLogo /></SysBtn>
        <SysBtn><SearchIcon /></SysBtn>
        <SysBtn><TaskViewIcon /></SysBtn>
        <Apps>
          <AppBtn $running><EdgeIcon /></AppBtn>
          <AppBtn><YandexIcon /></AppBtn>
          <AppBtn $running><FolderIcon /></AppBtn>
          <AppBtn $running><SkypeIcon /></AppBtn>
          <AppBtn $running><BrowserIcon /></AppBtn>
          <AppBtn $running $active><WordIcon /></AppBtn>
        </Apps>
        <Tray>
          <TrayItem $gap={0}><TrayChevron /></TrayItem>
          <TrayItem $gap={9}><PowerIcon /></TrayItem>
          <TrayItem $gap={8}><SpeakerIcon /></TrayItem>
          <TrayItem $gap={11}>РУС</TrayItem>
          <Clock>23:14<br />17.11.2016</Clock>
          <TrayItem $gap={17}><ActionIcon /></TrayItem>
          <TrayItem $gap={20} />
        </Tray>
      </Taskbar>

      <Menu>
        <MenuHead>Разрывы страниц</MenuHead>
        {renderItems(pageBreaks)}
        <MenuHead>Разрывы разделов</MenuHead>
        {renderItems(sectionBreaks)}
      </Menu>
    </Word>
  );
};

export default App;
